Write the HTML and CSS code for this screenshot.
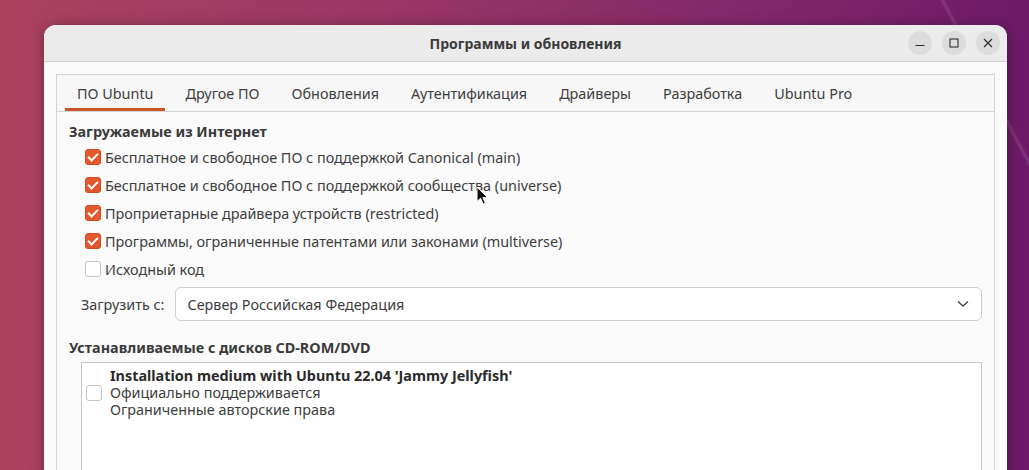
FILE: index.html
```html
<!DOCTYPE html>
<html lang="ru">
<head>
<meta charset="utf-8">
<title>Программы и обновления</title>
<link rel="stylesheet" href="styles.css">
</head>
<body>
<div class="desktop">
  <div class="window">
    <header class="titlebar">
      <span></span>
      <span class="title">Программы и обновления</span>
      <div class="controls">
        <span class="wbtn"><svg width="10" height="10" viewBox="0 0 10 10"><path d="M0.5 7.5H9.5" stroke="#2e2e2e" stroke-width="1.2"/></svg></span>
        <span class="wbtn"><svg width="10" height="10" viewBox="0 0 10 10"><rect x="1" y="1" width="8" height="8" fill="none" stroke="#2e2e2e" stroke-width="1.1"/></svg></span>
        <span class="wbtn"><svg width="10" height="10" viewBox="0 0 10 10"><path d="M1 1L9 9M9 1L1 9" stroke="#2e2e2e" stroke-width="1.2"/></svg></span>
      </div>
    </header>
    <main class="content">
      <div class="notebook">
        <nav class="tabs">
          <span class="tab active">ПО Ubuntu</span>
          <span class="tab">Другое ПО</span>
          <span class="tab">Обновления</span>
          <span class="tab">Аутентификация</span>
          <span class="tab">Драйверы</span>
          <span class="tab">Разработка</span>
          <span class="tab">Ubuntu Pro</span>
        </nav>
        <section class="page">
          <h2 class="heading">Загружаемые из Интернет</h2>
          <ul class="checks">
            <li class="check-row"><span class="cb on"></span>Бесплатное и свободное ПО с поддержкой Canonical (main)</li>
            <li class="check-row"><span class="cb on"></span>Бесплатное и свободное ПО с поддержкой сообщества (universe)</li>
            <li class="check-row"><span class="cb on"></span>Проприетарные драйвера устройств (restricted)</li>
            <li class="check-row"><span class="cb on"></span>Программы, ограниченные патентами или законами (multiverse)</li>
            <li class="check-row"><span class="cb"></span>Исходный код</li>
          </ul>
          <div class="source-row">
            <span class="source-label">Загрузить с:</span>
            <div class="combo">
              <span>Сервер Российская Федерация</span>
              <svg width="12" height="8" viewBox="0 0 12 8"><path d="M1 1.5L6 6L11 1.5" fill="none" stroke="#444" stroke-width="1.4"/></svg>
            </div>
          </div>
          <h2 class="heading heading-cd">Устанавливаемые с дисков CD-ROM/DVD</h2>
          <div class="cdlist">
            <div class="cditem">
              <span class="cb"></span>
              <div class="cdtext">
                <strong>Installation medium with Ubuntu 22.04 'Jammy Jellyfish'</strong>
                <span>Официально поддерживается</span>
                <span>Ограниченные авторские права</span>
              </div>
            </div>
          </div>
        </section>
      </div>
    </main>
  </div>
  <svg class="cursor" width="14" height="20" viewBox="0 0 14 20"><path d="M1 1V15.5L4.6 12.3L7.2 18.2L9.4 17.2L6.9 11.5H11.6Z" fill="#111" stroke="#fff" stroke-width="1"/></svg>
</div>
</body>
</html>
```

FILE: styles.css
```css
* { box-sizing: border-box; }
html, body { margin: 0; padding: 0; }
body {
  width: 1029px;
  height: 470px;
  overflow: hidden;
  font-family: "Noto Sans", "Open Sans", sans-serif;
  font-size: 14.4px;
  color: #3d3d3d;
}
.desktop {
  position: relative;
  width: 1029px;
  height: 470px;
  padding: 25px 0 0 44px;
  background:
    linear-gradient(62deg, transparent 93%, rgba(255,255,255,0.12) 93.2%, transparent 93.5%),
    linear-gradient(90deg, #ab4260 0%, #9a3764 35%, #85296a 70%, #6c1a68 100%);
}
.window {
  width: 963px;
  height: 470px;
  background: #fafafa;
  border-radius: 12px 12px 0 0;
  box-shadow: 0 2px 14px rgba(0,0,0,0.35);
  overflow: hidden;
}
.titlebar {
  height: 37px;
  display: grid;
  grid-template-columns: 1fr auto 1fr;
  align-items: center;
  background: #ebebeb;
  border-bottom: 1px solid #d2d2d2;
}
.title {
  font-weight: bold;
  font-size: 14px;
  color: #3a3a3a;
  padding-top: 1px;
}
.controls {
  display: flex;
  justify-content: flex-end;
  gap: 10px;
  padding-right: 7px;
}
.wbtn {
  width: 24px;
  height: 24px;
  border-radius: 50%;
  background: #dcdcdc;
  display: flex;
  align-items: center;
  justify-content: center;
}
.content {
  padding: 12px;
}
.notebook {
  border: 1px solid #d4d4d4;
  background: #fafafa;
  height: 420px;
}
.tabs {
  display: flex;
  height: 37px;
  padding-left: 4px;
  background: #f7f7f7;
  border-bottom: 1px solid #d4d4d4;
}
.tab {
  position: relative;
  display: flex;
  align-items: center;
  padding: 0 16px;
  color: #3d3d3d;
}
.tab.active::after {
  content: "";
  position: absolute;
  left: 4px;
  right: 5px;
  bottom: 0;
  height: 3px;
  background: #c9562b;
}
.page {
  padding: 10px 12px 0 12px;
}
.heading {
  margin: 0;
  font-size: 14.4px;
  font-weight: bold;
  line-height: 20px;
  color: #3a3a3a;
}
.checks {
  list-style: none;
  margin: 1px 0 0 0;
  padding: 0 0 0 16px;
}
.check-row {
  display: flex;
  align-items: center;
  gap: 4px;
  height: 28px;
}
.cb {
  width: 16px;
  height: 16px;
  flex: none;
  border-radius: 3px;
  border: 1px solid #c4c4c4;
  background: #fff;
  position: relative;
}
.cb.on {
  background: #e4582d;
  border-color: #d24c23;
}
.cb.on::after {
  content: "";
  position: absolute;
  left: 4px;
  top: 1px;
  width: 4px;
  height: 8px;
  border: solid #fff;
  border-width: 0 2px 2px 0;
  transform: rotate(45deg);
}
.source-row {
  display: flex;
  align-items: center;
  gap: 11px;
  margin-top: 4px;
  padding-left: 12px;
}
.combo {
  flex: 1;
  height: 34px;
  border: 1px solid #cdcdcd;
  border-radius: 6px;
  background: #fff;
  display: flex;
  align-items: center;
  justify-content: space-between;
  padding: 0 12px 0 11px;
}
.heading-cd {
  margin-top: 17px;
}
.cdlist {
  margin: 4px 0 0 12px;
  height: 140px;
  border: 1px solid #c8c8c8;
  background: #fff;
  padding: 4px 4px;
}
.cditem {
  display: flex;
  align-items: center;
  gap: 8px;
}
.cdtext {
  display: flex;
  flex-direction: column;
  line-height: 17px;
}
.cdtext strong {
  color: #2a2a2a;
}
.cursor {
  position: absolute;
  left: 476px;
  top: 186px;
}
```
